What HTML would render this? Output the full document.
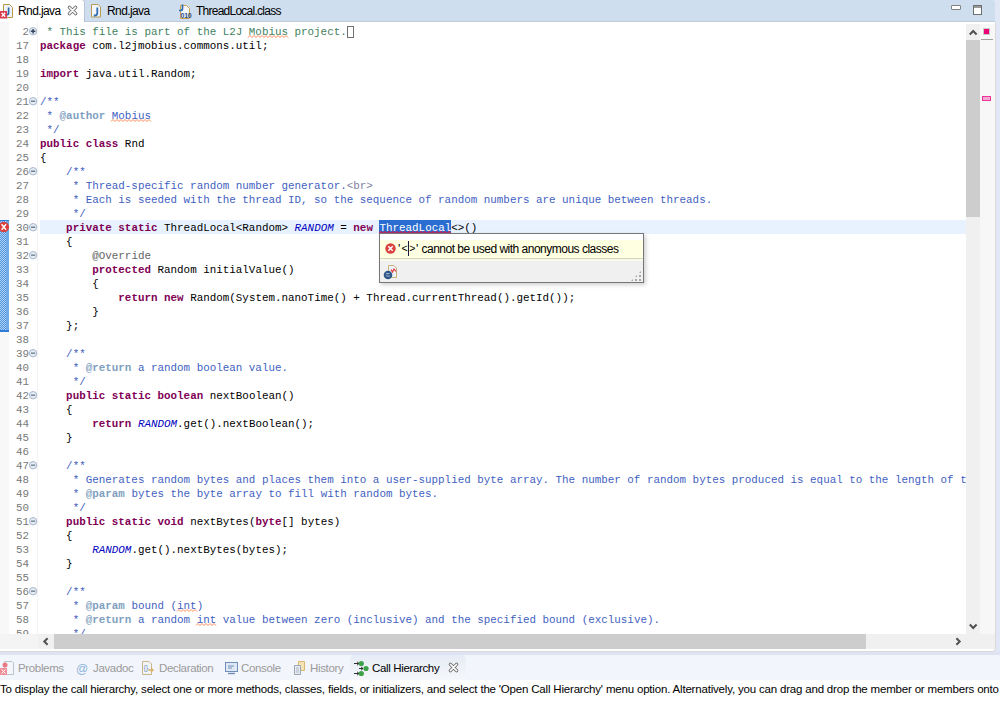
<!DOCTYPE html>
<html><head><meta charset="utf-8">
<style>
*{margin:0;padding:0;box-sizing:border-box}
html,body{width:1000px;height:704px;overflow:hidden;background:#fff;position:relative}
.abs{position:absolute}
svg{position:absolute;overflow:visible}
#outer{left:0;top:0;width:1000px;height:704px;background:#e2e7f5}
#tabbar{left:0;top:0;width:995px;height:22px;background:#cfdeee;border-bottom:1px solid #bfcadb;border-top-right-radius:3px}
.tab{position:absolute;top:1px;height:21px;font:12px "Liberation Sans",sans-serif;letter-spacing:-0.6px;color:#000;line-height:21px;white-space:nowrap}
#atab{left:0;top:0;width:84px;height:22px;background:#fff;border-top-right-radius:3px;box-shadow:1px 0 0 #b9c6da}
#editor{left:0;top:22px;width:996px;height:630px;background:#fff;border-right:1px solid #d9d9d9;border-bottom:1px solid #d9d9d9;border-bottom-right-radius:4px;overflow:hidden}
#clip{left:0;top:0;width:966px;height:612px;overflow:hidden}
#ruler{left:0;top:0;width:9px;height:612px;background:#f8f8f8}
.ln{position:absolute;left:0;width:29px;text-align:right;color:#787878;font-family:"Liberation Mono",monospace;font-size:10.88px;height:14px;line-height:14px}
.row{position:absolute;left:40px;height:14px;line-height:14px;color:#000;font-family:"Liberation Mono",monospace;font-size:10.88px;white-space:pre}
.k{color:#7f0055;font-weight:bold}
.jd{color:#3f5fbf}
.tg{color:#7f9fbf;font-weight:bold}
.lc{color:#3f7f5f}
.sf{color:#0000c0;font-style:italic}
.an{color:#646464}
.jh{color:#7f7f9f}
.sq{height:3px;background:linear-gradient(45deg,transparent 35%,#ff9470 35%,#ff9470 60%,transparent 60%) 0 0/4px 3px,linear-gradient(-45deg,transparent 35%,#ff9470 35%,#ff9470 60%,transparent 60%) 2px 0/4px 3px}
.sqr{height:3px;background:linear-gradient(45deg,transparent 35%,#d02060 35%,#d02060 60%,transparent 60%) 0 0/4px 3px,linear-gradient(-45deg,transparent 35%,#d02060 35%,#d02060 60%,transparent 60%) 2px 0/4px 3px}
.sel{color:#fff}
.fold{position:absolute;left:29px;width:8px;height:8px;border-radius:50%;background:radial-gradient(circle at 40% 35%,#eef2f8,#bcc7d6);border:1px solid #a9b6c8}
.fold:after{content:"";position:absolute;left:1px;top:2.5px;width:4px;height:1.2px;background:#3c4a5c}
.fp:before{content:"";position:absolute;left:2.4px;top:1px;width:1.2px;height:4px;background:#3c4a5c}
#vscroll{left:966px;top:2px;width:14px;height:610px;background:#f0f0f0}
#vthumb{left:0;top:16px;width:14px;height:177px;background:#cdcdcd}
#overview{left:980px;top:2px;width:15px;height:610px;background:#f7f7f7}
#hscroll{left:38px;top:612px;width:928px;height:15px;background:#f0f0f0}
#hthumb{left:16px;top:0;width:812px;height:15px;background:#cdcdcd}
#corner{left:966px;top:612px;width:29px;height:15px;background:#f0f0f0}
#panelbar{left:0;top:652px;width:1000px;height:28px;background:#f2f5fb}
#panelband{left:0;top:652px;width:1000px;height:3px;background:#dde3f3}
.ptab{position:absolute;top:661.5px;height:23px;line-height:23px;font:11.5px "Liberation Sans",sans-serif;letter-spacing:-0.35px;color:#9a9a9a;white-space:nowrap}
#ptext{left:0;top:680px;width:1000px;height:24px;padding-top:1px;background:#fff;font:11.5px "Liberation Sans",sans-serif;letter-spacing:-0.185px;line-height:17px;white-space:nowrap;color:#000}
#popup{left:379px;top:233px;width:265px;height:50px;background:#f0f0f0;border:1px solid #767676;box-shadow:2px 2px 4px rgba(0,0,0,0.18)}
#pyellow{left:0;top:6px;width:263px;height:18px;background:#ffffe1}
#pwhite{left:0;top:0;width:263px;height:6px;background:#fff}
.pm{position:absolute;top:2px;height:18px;line-height:18px;font:12px "Liberation Sans",sans-serif;letter-spacing:-0.5px;color:#000;white-space:nowrap}
#pmsgx{left:18px;top:2px;height:18px;line-height:18px;font:12px "Liberation Sans",sans-serif;letter-spacing:-0.5px;color:#000;white-space:nowrap}
</style></head><body>
<div id="outer" class="abs"></div>
<div id="tabbar" class="abs">
  <div id="atab" class="abs"></div>
  <!-- tab1 icon -->
  <svg style="left:0;top:0" width="20" height="22" viewBox="0 0 20 22">
    <path d="M3.5 4.5 H9.5 L12.5 7.5 V17.5 H3.5 Z" fill="#eef3fa" stroke="#b8984a" stroke-width="1"/>
    <path d="M8.6 7.5 v5.3 q0 2.2 -2.2 2.2 h-0.6" fill="none" stroke="#2f64a8" stroke-width="1.7"/>
    <rect x="0" y="11" width="7" height="7.5" fill="#dc3a4c"/>
    <path d="M1.6 12.8 l3.6 4 M5.2 12.8 l-3.6 4" stroke="#fff" stroke-width="1.3"/>
  </svg>
  <div class="tab" style="left:18px">Rnd.java</div>
  <svg style="left:67px;top:5px" width="12" height="12" viewBox="0 0 12 12">
    <path d="M2.4 2.4 L8.6 8.6 M8.6 2.4 L2.4 8.6" stroke="#6a6a6a" stroke-width="3.4" stroke-linecap="round"/>
    <path d="M2.4 2.4 L8.6 8.6 M8.6 2.4 L2.4 8.6" stroke="#fff" stroke-width="1.5" stroke-linecap="round"/>
  </svg>
  <!-- tab2 icon -->
  <svg style="left:88px;top:0" width="18" height="22" viewBox="0 0 18 22">
    <path d="M3.5 4.5 H10 L12.5 7 V17 H3.5 Z" fill="#f2f5fa" stroke="#b89a52" stroke-width="1"/>
    <path d="M9.3 7.5 v5.5 q0 2.5 -2.5 2.5 h-1" fill="none" stroke="#2f6db5" stroke-width="1.8"/>
  </svg>
  <div class="tab" style="left:107px">Rnd.java</div>
  <!-- tab3 icon -->
  <svg style="left:176px;top:0" width="18" height="22" viewBox="0 0 18 22">
    <path d="M4.5 5.5 H10.5 L13.5 8.5 V18.5 H4.5 Z" fill="#f2f5fa" stroke="#c9a24e" stroke-width="1"/>
    <path d="M6.5 4.5 v4 q0 2 -2 2 h-1.5" fill="none" stroke="#2f6db5" stroke-width="1.7"/>
    <text x="4.6" y="17.6" font-family="Liberation Sans" font-weight="bold" font-size="7" letter-spacing="-0.3" fill="#284f86">010</text>
  </svg>
  <div class="tab" style="left:196px;letter-spacing:-0.75px">ThreadLocal.class</div>
  <!-- min / max -->
  <div class="abs" style="left:951px;top:5px;width:10px;height:5px;border:1.5px solid #808080;background:#fff;border-radius:1px"></div>
  <div class="abs" style="left:973px;top:5px;width:9px;height:10px;border:1px solid #6e6e6e;background:linear-gradient(#9a9a9a 0,#9a9a9a 2px,#fff 2px)"></div>
</div>
<div id="editor" class="abs">
  <div id="ruler" class="abs"></div>
  <div id="clip" class="abs">
  <div class="abs" style="left:37px;top:0;width:1px;height:612px;background:#f4f4f4"></div>
  <div class="abs" style="left:40px;top:198px;width:926px;height:14px;background:#e8f2fe"></div>
  <div class="abs" style="left:379.4px;top:198px;width:71.8px;height:14px;background:#2b6cd0"></div>
<div class="ln" style="top:3px">2</div>
<svg style="left:28px;top:4px" width="10" height="10" viewBox="0 0 10 10"><circle cx="5.1" cy="5.2" r="3.7" fill="#e4ecf6" stroke="#a9b7ca" stroke-width="1"/><path d="M2.8 5.2 h4.6 M5.1 2.9 v4.6" stroke="#34435e" stroke-width="1.5"/></svg>
<div class="row" style="top:3px"><span class="lc"> * This file is part of the L2J Mobius project.</span></div>
<div class="ln" style="top:17px">17</div>
<div class="row" style="top:17px"><span class="k">package</span> com.l2jmobius.commons.util;</div>
<div class="ln" style="top:31px">18</div>
<div class="row" style="top:31px"></div>
<div class="ln" style="top:45px">19</div>
<div class="row" style="top:45px"><span class="k">import</span> java.util.Random;</div>
<div class="ln" style="top:59px">20</div>
<div class="row" style="top:59px"></div>
<div class="ln" style="top:73px">21</div>
<svg style="left:28px;top:74px" width="10" height="10" viewBox="0 0 10 10"><circle cx="5.1" cy="5.2" r="3.7" fill="#e4ecf6" stroke="#a9b7ca" stroke-width="1"/><path d="M3 5.2 h4.2" stroke="#75808f" stroke-width="1.4"/></svg>
<div class="row" style="top:73px"><span class="jd">/**</span></div>
<div class="ln" style="top:87px">22</div>
<div class="row" style="top:87px"><span class="jd"> * </span><span class="tg">@author</span><span class="jd"> Mobius</span></div>
<div class="ln" style="top:101px">23</div>
<div class="row" style="top:101px"><span class="jd"> */</span></div>
<div class="ln" style="top:115px">24</div>
<div class="row" style="top:115px"><span class="k">public</span> <span class="k">class</span> Rnd</div>
<div class="ln" style="top:129px">25</div>
<div class="row" style="top:129px">{</div>
<div class="ln" style="top:143px">26</div>
<svg style="left:28px;top:144px" width="10" height="10" viewBox="0 0 10 10"><circle cx="5.1" cy="5.2" r="3.7" fill="#e4ecf6" stroke="#a9b7ca" stroke-width="1"/><path d="M3 5.2 h4.2" stroke="#75808f" stroke-width="1.4"/></svg>
<div class="row" style="top:143px"><span class="jd">    /**</span></div>
<div class="ln" style="top:157px">27</div>
<div class="row" style="top:157px"><span class="jd">     * Thread-specific random number generator.</span><span class="jh">&lt;br&gt;</span></div>
<div class="ln" style="top:171px">28</div>
<div class="row" style="top:171px"><span class="jd">     * Each is seeded with the thread ID, so the sequence of random numbers are unique between threads.</span></div>
<div class="ln" style="top:185px">29</div>
<div class="row" style="top:185px"><span class="jd">     */</span></div>
<div class="ln" style="top:199px">30</div>
<svg style="left:28px;top:200px" width="10" height="10" viewBox="0 0 10 10"><circle cx="5.1" cy="5.2" r="3.7" fill="#e4ecf6" stroke="#a9b7ca" stroke-width="1"/><path d="M3 5.2 h4.2" stroke="#75808f" stroke-width="1.4"/></svg>
<div class="row" style="top:199px">    <span class="k">private</span> <span class="k">static</span> ThreadLocal&lt;Random&gt; <span class="sf">RANDOM</span> = <span class="k">new</span> <span class="sel">ThreadLocal</span>&lt;&gt;()</div>
<div class="ln" style="top:213px">31</div>
<div class="row" style="top:213px">    {</div>
<div class="ln" style="top:227px">32</div>
<svg style="left:28px;top:228px" width="10" height="10" viewBox="0 0 10 10"><circle cx="5.1" cy="5.2" r="3.7" fill="#e4ecf6" stroke="#a9b7ca" stroke-width="1"/><path d="M3 5.2 h4.2" stroke="#75808f" stroke-width="1.4"/></svg>
<div class="row" style="top:227px">        <span class="an">@Override</span></div>
<div class="ln" style="top:241px">33</div>
<div class="row" style="top:241px">        <span class="k">protected</span> Random initialValue()</div>
<div class="ln" style="top:255px">34</div>
<div class="row" style="top:255px">        {</div>
<div class="ln" style="top:269px">35</div>
<div class="row" style="top:269px">            <span class="k">return</span> <span class="k">new</span> Random(System.nanoTime() + Thread.currentThread().getId());</div>
<div class="ln" style="top:283px">36</div>
<div class="row" style="top:283px">        }</div>
<div class="ln" style="top:297px">37</div>
<div class="row" style="top:297px">    };</div>
<div class="ln" style="top:311px">38</div>
<div class="row" style="top:311px"></div>
<div class="ln" style="top:325px">39</div>
<svg style="left:28px;top:326px" width="10" height="10" viewBox="0 0 10 10"><circle cx="5.1" cy="5.2" r="3.7" fill="#e4ecf6" stroke="#a9b7ca" stroke-width="1"/><path d="M3 5.2 h4.2" stroke="#75808f" stroke-width="1.4"/></svg>
<div class="row" style="top:325px"><span class="jd">    /**</span></div>
<div class="ln" style="top:339px">40</div>
<div class="row" style="top:339px"><span class="jd">     * </span><span class="tg">@return</span><span class="jd"> a random boolean value.</span></div>
<div class="ln" style="top:353px">41</div>
<div class="row" style="top:353px"><span class="jd">     */</span></div>
<div class="ln" style="top:367px">42</div>
<svg style="left:28px;top:368px" width="10" height="10" viewBox="0 0 10 10"><circle cx="5.1" cy="5.2" r="3.7" fill="#e4ecf6" stroke="#a9b7ca" stroke-width="1"/><path d="M3 5.2 h4.2" stroke="#75808f" stroke-width="1.4"/></svg>
<div class="row" style="top:367px">    <span class="k">public</span> <span class="k">static</span> <span class="k">boolean</span> nextBoolean()</div>
<div class="ln" style="top:381px">43</div>
<div class="row" style="top:381px">    {</div>
<div class="ln" style="top:395px">44</div>
<div class="row" style="top:395px">        <span class="k">return</span> <span class="sf">RANDOM</span>.get().nextBoolean();</div>
<div class="ln" style="top:409px">45</div>
<div class="row" style="top:409px">    }</div>
<div class="ln" style="top:423px">46</div>
<div class="row" style="top:423px"></div>
<div class="ln" style="top:437px">47</div>
<svg style="left:28px;top:438px" width="10" height="10" viewBox="0 0 10 10"><circle cx="5.1" cy="5.2" r="3.7" fill="#e4ecf6" stroke="#a9b7ca" stroke-width="1"/><path d="M3 5.2 h4.2" stroke="#75808f" stroke-width="1.4"/></svg>
<div class="row" style="top:437px"><span class="jd">    /**</span></div>
<div class="ln" style="top:451px">48</div>
<div class="row" style="top:451px"><span class="jd">     * Generates random bytes and places them into a user-supplied byte array. The number of random bytes produced is equal to the length of the array.</span></div>
<div class="ln" style="top:465px">49</div>
<div class="row" style="top:465px"><span class="jd">     * </span><span class="tg">@param</span><span class="jd"> bytes the byte array to fill with random bytes.</span></div>
<div class="ln" style="top:479px">50</div>
<div class="row" style="top:479px"><span class="jd">     */</span></div>
<div class="ln" style="top:493px">51</div>
<svg style="left:28px;top:494px" width="10" height="10" viewBox="0 0 10 10"><circle cx="5.1" cy="5.2" r="3.7" fill="#e4ecf6" stroke="#a9b7ca" stroke-width="1"/><path d="M3 5.2 h4.2" stroke="#75808f" stroke-width="1.4"/></svg>
<div class="row" style="top:493px">    <span class="k">public</span> <span class="k">static</span> <span class="k">void</span> nextBytes(<span class="k">byte</span>[] bytes)</div>
<div class="ln" style="top:507px">52</div>
<div class="row" style="top:507px">    {</div>
<div class="ln" style="top:521px">53</div>
<div class="row" style="top:521px">        <span class="sf">RANDOM</span>.get().nextBytes(bytes);</div>
<div class="ln" style="top:535px">54</div>
<div class="row" style="top:535px">    }</div>
<div class="ln" style="top:549px">55</div>
<div class="row" style="top:549px"></div>
<div class="ln" style="top:563px">56</div>
<svg style="left:28px;top:564px" width="10" height="10" viewBox="0 0 10 10"><circle cx="5.1" cy="5.2" r="3.7" fill="#e4ecf6" stroke="#a9b7ca" stroke-width="1"/><path d="M3 5.2 h4.2" stroke="#75808f" stroke-width="1.4"/></svg>
<div class="row" style="top:563px"><span class="jd">    /**</span></div>
<div class="ln" style="top:577px">57</div>
<div class="row" style="top:577px"><span class="jd">     * </span><span class="tg">@param</span><span class="jd"> bound (int)</span></div>
<div class="ln" style="top:591px">58</div>
<div class="row" style="top:591px"><span class="jd">     * </span><span class="tg">@return</span><span class="jd"> a random int value between zero (inclusive) and the specified bound (exclusive).</span></div>
<div class="ln" style="top:605px">59</div>
<div class="row" style="top:605px"><span class="jd">     */</span></div>
<svg style="left:111px;top:97px" width="43" height="3" viewBox="0 0 43 3"><polyline points="0,2.5 2,0.5 4,2.5 6,0.5 8,2.5 10,0.5 12,2.5 14,0.5 16,2.5 18,0.5 20,2.5 22,0.5 24,2.5 26,0.5 28,2.5 30,0.5 32,2.5 34,0.5 36,2.5 38,0.5 40,2.5" fill="none" stroke="#ff8c5a" stroke-width="1"/></svg>
<svg style="left:248px;top:13px" width="43" height="3" viewBox="0 0 43 3"><polyline points="0,2.5 2,0.5 4,2.5 6,0.5 8,2.5 10,0.5 12,2.5 14,0.5 16,2.5 18,0.5 20,2.5 22,0.5 24,2.5 26,0.5 28,2.5 30,0.5 32,2.5 34,0.5 36,2.5 38,0.5 40,2.5" fill="none" stroke="#ff8c5a" stroke-width="1"/></svg>
<svg style="left:196px;top:601px" width="23" height="3" viewBox="0 0 23 3"><polyline points="0,2.5 2,0.5 4,2.5 6,0.5 8,2.5 10,0.5 12,2.5 14,0.5 16,2.5 18,0.5 20,2.5" fill="none" stroke="#ff8c5a" stroke-width="1"/></svg>
<svg style="left:177px;top:587px" width="23" height="3" viewBox="0 0 23 3"><polyline points="0,2.5 2,0.5 4,2.5 6,0.5 8,2.5 10,0.5 12,2.5 14,0.5 16,2.5 18,0.5 20,2.5" fill="none" stroke="#ff8c5a" stroke-width="1"/></svg>
<svg style="left:379px;top:209px" width="74" height="3" viewBox="0 0 74 3"><polyline points="0,2.5 2,0.5 4,2.5 6,0.5 8,2.5 10,0.5 12,2.5 14,0.5 16,2.5 18,0.5 20,2.5 22,0.5 24,2.5 26,0.5 28,2.5 30,0.5 32,2.5 34,0.5 36,2.5 38,0.5 40,2.5 42,0.5 44,2.5 46,0.5 48,2.5 50,0.5 52,2.5 54,0.5 56,2.5 58,0.5 60,2.5 62,0.5 64,2.5 66,0.5 68,2.5 70,0.5 72,2.5" fill="none" stroke="#c8205a" stroke-width="1.1"/></svg>
  <div class="abs" style="left:347px;top:4px;width:7px;height:12px;border:1px solid #707070"></div>
  </div>
  <!-- left change bar + error icon -->
  <div class="abs" style="left:0;top:198px;width:9px;height:111px;background:#6eaae8"></div>
  <div class="abs" style="left:0;top:198px;width:6px;height:111px;background:repeating-conic-gradient(#4b93de 0 25%,#b4d4f4 0 50%) 0 0/2px 2px"></div>
  <div class="abs" style="left:0;top:308px;width:9px;height:2px;background:#2f7fd8"></div>
  <div class="abs" style="left:0;top:198px;width:9px;height:1px;background:#2f7fd8"></div>
  <svg style="left:0;top:199px" width="10" height="12" viewBox="0 0 10 12">
    <circle cx="3.8" cy="6" r="5.3" fill="#d9403d"/>
    <path d="M1.6 3.3 L6 8.7 M6 3.3 L1.6 8.7" stroke="#fff" stroke-width="1.4"/>
  </svg>
  <div id="vscroll" class="abs"><div id="vthumb" class="abs"></div>
    <svg style="left:0;top:0" width="14" height="16" viewBox="0 0 14 16"><path d="M3.8 10.5 L7.2 7 L10.6 10.5" fill="none" stroke="#505050" stroke-width="2"/></svg>
    <svg style="left:0;top:594px" width="14" height="16" viewBox="0 0 14 16"><path d="M3.8 6.5 L7.2 10 L10.6 6.5" fill="none" stroke="#505050" stroke-width="2"/></svg>
  </div>
  <div id="overview" class="abs">
    <div class="abs" style="left:3px;top:4px;width:7px;height:7px;background:#ee0077;border:1px solid #c8c8c8"></div>
    <div class="abs" style="left:1px;top:15px;width:12px;height:1px;background:#a0a0a0"></div>
    <div class="abs" style="left:2px;top:72px;width:9px;height:5px;background:#f7a8d2;border:1px solid #ee3399"></div>
  </div>
  <div id="hscroll" class="abs"><div id="hthumb" class="abs"></div>
    <svg style="left:0;top:0" width="16" height="15" viewBox="0 0 16 15"><path d="M9.6 4.3 L6.3 7.5 L9.6 10.7" fill="none" stroke="#505050" stroke-width="2"/></svg>
  </div>
  <div class="abs" style="left:0;top:612px;width:38px;height:15px;background:#f4f4f4"></div>
  <div id="corner" class="abs">
    <svg style="left:-16px;top:0" width="16" height="15" viewBox="0 0 16 15"><path d="M6.4 4.3 L9.7 7.5 L6.4 10.7" fill="none" stroke="#505050" stroke-width="2"/></svg>
  </div>
</div>
<!-- popup -->
<div id="popup" class="abs">
  <div id="pwhite" class="abs"></div>
  <div class="abs" style="left:0;top:24px;width:263px;height:1px;background:#d4d4c6"></div>
  <div class="abs" style="left:0;top:25px;width:263px;height:2px;background:#fafae8"></div>
  <div id="pyellow" class="abs">
    <svg style="left:4.5px;top:3px" width="11" height="11" viewBox="0 0 11 11"><circle cx="5.5" cy="5.5" r="5.2" fill="#d8433f"/><path d="M3.3 3.3 L7.7 7.7 M7.7 3.3 L3.3 7.7" stroke="#fff" stroke-width="1.5"/></svg>
    <span class="pm" style="left:18px">'</span><span class="pm" style="left:21.5px;font-size:10.5px">&lt;</span><span class="pm" style="left:29.2px;font-size:10.5px">&gt;</span><span class="pm" style="left:36px">'</span><span class="pm" style="left:41.5px">cannot be used with anonymous classes</span>
    <div class="abs" style="left:28px;top:1px;width:1px;height:15px;background:#1a1a3a"></div>
  </div>
  <svg style="left:3px;top:30px" width="16" height="16" viewBox="0 0 16 16">
    <path d="M5.5 1.5 H11 L13.5 4 V13.5 H5.5 Z" fill="#eef2f8" stroke="#c9b27a" stroke-width="1"/>
    <path d="M8 5.5 L9.5 8 L11 5 L13 7.5" fill="none" stroke="#e03838" stroke-width="1.2"/>
    <circle cx="5" cy="11" r="4.3" fill="#2f5687"/>
    <path d="M3 9.5 h3.5 M3.5 12 h3.5 M4 10.7 l-1 1" stroke="#a9bfdc" stroke-width="0.9"/>
  </svg>
  <div class="abs" style="left:250px;top:36px;width:12px;height:12px;background:radial-gradient(circle,#a8a8a8 0.8px,transparent 1.1px) 0 0/4px 4px;clip-path:polygon(100% 0,100% 100%,0 100%)"></div>
</div>
<!-- bottom panel -->
<div id="panelbar" class="abs"></div>
<div id="panelband" class="abs"></div>
<div class="abs" style="left:350px;top:655px;width:116px;height:25px;background:linear-gradient(#e6ecf5,#f5f7fb);border-radius:5px 5px 0 0"></div>
<svg style="left:0;top:660px" width="16" height="16" viewBox="0 0 16 16">
  <path d="M4.5 1.5 H12 L13.5 3 V14.5 H4.5 Z" fill="#f4f6fa" stroke="#b9c3cf" stroke-width="1"/>
  <circle cx="5" cy="5" r="2.5" fill="#e87a86"/>
  <rect x="0" y="8" width="7" height="7" fill="#f08f97"/>
  <path d="M1.5 9.5 L5.5 13.5 M5.5 9.5 L1.5 13.5" stroke="#fff" stroke-width="1"/>
</svg>
<div class="ptab" style="left:18px">Problems</div>
<div class="ptab" style="left:76px;color:#8fb4d9;font-size:12px">@</div>
<div class="ptab" style="left:93px">Javadoc</div>
<svg style="left:140px;top:660px" width="16" height="16" viewBox="0 0 16 16">
  <path d="M2.5 1.5 H9 L11.5 4 V14.5 H2.5 Z" fill="#f2f4f8" stroke="#c7b68a" stroke-width="1"/>
  <text x="3.5" y="10" font-family="Liberation Sans" font-size="7" fill="#6f93c4">{}</text>
  <path d="M8 10 h5 l-2 -2 M13 10 l-2 2" fill="none" stroke="#d9b368" stroke-width="1.3"/>
</svg>
<div class="ptab" style="left:159px">Declaration</div>
<svg style="left:224px;top:660px" width="16" height="16" viewBox="0 0 16 16">
  <rect x="1.5" y="2.5" width="12" height="9" fill="#dfe8f4" stroke="#6e8fb8" stroke-width="1"/>
  <path d="M4 6 h6 M4 8 h4" stroke="#6e8fb8" stroke-width="1"/>
  <path d="M4 13.5 h7" stroke="#6e8fb8" stroke-width="1.4"/>
</svg>
<div class="ptab" style="left:241px">Console</div>
<svg style="left:292px;top:660px" width="16" height="16" viewBox="0 0 16 16">
  <path d="M6.5 1.5 h6 v9 h-6 z" fill="#f5e3b5" stroke="#d6b870" stroke-width="1"/>
  <path d="M2.5 5.5 h6 v9 h-6 z" fill="#e9edf3" stroke="#9aa6b6" stroke-width="1"/>
  <path d="M4 8 h3 M4 10 h3 M4 12 h3" stroke="#9aa6b6" stroke-width="0.8"/>
</svg>
<div class="ptab" style="left:310px">History</div>
<svg style="left:353px;top:660px" width="18" height="17" viewBox="0 0 18 17">
  <path d="M1 3.5 h5 M4 1.8 l2 1.7 l-2 1.7" fill="none" stroke="#333" stroke-width="1"/>
  <path d="M1 13.5 h5 M4 11.8 l2 1.7 l-2 1.7" fill="none" stroke="#333" stroke-width="1"/>
  <path d="M6 8.5 h4 M8 6.8 l2 1.7 l-2 1.7" fill="none" stroke="#333" stroke-width="1"/>
  <circle cx="8.3" cy="3.5" r="2.6" fill="#3fa14a"/>
  <circle cx="8.3" cy="13.5" r="2.6" fill="#3fa14a"/>
  <circle cx="13" cy="8.5" r="2.6" fill="#3fa14a"/>
</svg>
<div class="ptab" style="left:372px;color:#000">Call Hierarchy</div>
<svg style="left:448px;top:662px" width="12" height="12" viewBox="0 0 12 12">
  <path d="M2.4 2.4 L8.6 8.6 M8.6 2.4 L2.4 8.6" stroke="#6a6a6a" stroke-width="3.4" stroke-linecap="round"/>
  <path d="M2.4 2.4 L8.6 8.6 M8.6 2.4 L2.4 8.6" stroke="#fff" stroke-width="1.5" stroke-linecap="round"/>
</svg>
<div id="ptext" class="abs">To display the call hierarchy, select one or more methods, classes, fields, or initializers, and select the 'Open Call Hierarchy' menu option. Alternatively, you can drag and drop the member or members onto</div>
</body></html>
